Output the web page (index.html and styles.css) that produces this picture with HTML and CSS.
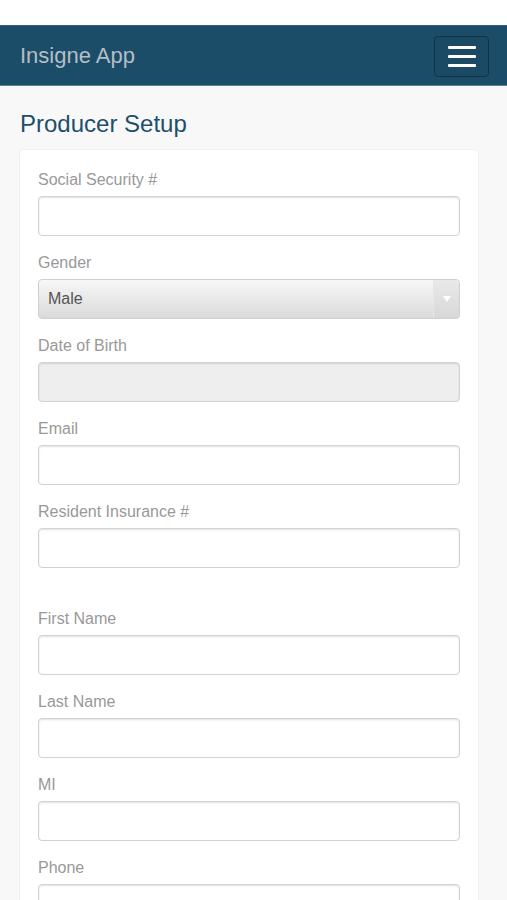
FILE: index.html
```html
<!DOCTYPE html>
<html>
<head>
<meta charset="utf-8">
<link rel="stylesheet" href="styles.css">
</head>
<body>
<div class="status"></div>
<nav class="navbar">
  <span class="brand">Insigne App</span>
  <button class="toggle" aria-label="menu"><span></span><span></span><span></span></button>
</nav>
<main class="page">
  <h1 class="title">Producer Setup</h1>
  <div class="card">
    <div class="group"><label>Social Security #</label><div class="input"></div></div>
    <div class="group"><label>Gender</label>
      <div class="select"><span class="val">Male</span><span class="arrow"><svg width="8" height="6" viewBox="0 0 8 6"><path d="M0 0h8L4 6z" fill="#fff"/></svg></span></div>
    </div>
    <div class="group"><label>Date of Birth</label><div class="input disabled"></div></div>
    <div class="group"><label>Email</label><div class="input"></div></div>
    <div class="group section-end"><label>Resident Insurance #</label><div class="input"></div></div>
    <div class="group"><label>First Name</label><div class="input"></div></div>
    <div class="group"><label>Last Name</label><div class="input"></div></div>
    <div class="group"><label>MI</label><div class="input"></div></div>
    <div class="group"><label>Phone</label><div class="input"></div></div>
  </div>
</main>
</body>
</html>
```
FILE: styles.css
```css
html, body {
  margin: 0;
  padding: 0;
  background: #f8f8f8;
  font-family: "Liberation Sans", Arial, sans-serif;
  overflow: hidden;
}
.status {
  height: 25px;
  background: #fff;
}
.navbar {
  height: 59px;
  background: #1b4d69;
  border-top: 1px solid #2f5f79;
  border-bottom: 1px solid #5b8399;
  display: flex;
  align-items: center;
  justify-content: space-between;
  padding: 0 18px 0 20px;
}
.brand {
  color: #b3bec6;
  font-size: 22px;
  line-height: 1;
}
.toggle {
  width: 55px;
  height: 41px;
  border: 1px solid #0f3447;
  border-radius: 4px;
  background: #1a4a64;
  display: flex;
  flex-direction: column;
  align-items: center;
  justify-content: center;
  gap: 6px;
  padding: 0;
  margin-top: 1px;
}
.toggle span {
  display: block;
  width: 28px;
  height: 3px;
  background: #fff;
  border-radius: 1px;
}
.page {
  padding: 25px 28px 0 19px;
}
.title {
  margin: 0 0 12px 1px;
  font-size: 24px;
  font-weight: normal;
  line-height: 1.1;
  color: #1d4f6c;
}
.card {
  background: #fff;
  border: 1px solid #f0f0f0;
  border-radius: 4px;
  padding: 19px 18px 15px;
}
.group {
  margin-bottom: 16px;
}
.group.section-end {
  margin-bottom: 40px;
}
label {
  display: block;
  font-size: 16px;
  line-height: 22px;
  color: #999;
  margin-bottom: 5px;
}
.input {
  height: 38px;
  border: 1px solid #d2d2d2;
  border-radius: 4px;
  background: #fff;
  box-shadow: inset 0 1px 2px rgba(0,0,0,0.12);
}
.input.disabled {
  background: #eee;
}
.select {
  height: 38px;
  border: 1px solid #d0d0d0;
  border-radius: 4px;
  background: linear-gradient(#f7f7f7, #dadada);
  display: flex;
  align-items: center;
  justify-content: space-between;
}
.select .val {
  padding-left: 9px;
  font-size: 16px;
  color: #555;
}
.select .arrow {
  width: 25px;
  height: 38px;
  display: flex;
  align-items: center;
  justify-content: center;
  border-left: 1px solid #e6e6e6;
  background: linear-gradient(#e9e9e9, #d8d8d8);
  border-radius: 0 4px 4px 0;
}
```
